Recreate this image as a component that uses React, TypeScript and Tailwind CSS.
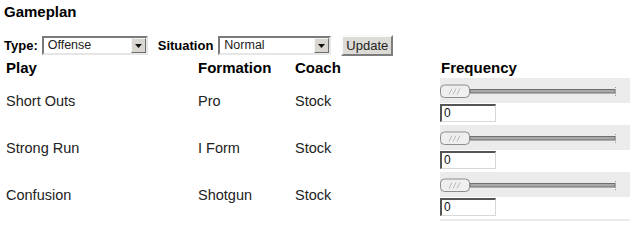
import React from 'react';

const plays = [
  { name: 'Short Outs', formation: 'Pro', coach: 'Stock' },
  { name: 'Strong Run', formation: 'I Form', coach: 'Stock' },
  { name: 'Confusion', formation: 'Shotgun', coach: 'Stock' },
];

const FakeSelect = ({ value, width }: { value: string; width: string }) => (
  <div
    className={`${width} h-[19px] flex items-stretch bg-white border-2 border-t-[#7b7b7b] border-l-[#7b7b7b] border-b-[#e6e6e6] border-r-[#e6e6e6]`}
  >
    <span className="flex-1 pl-[4px] text-[12.5px] leading-[15px] text-[#222]">{value}</span>
    <span className="w-[15px] bg-[#d9d6cf] border border-t-[#f4f4f4] border-l-[#f4f4f4] border-b-[#6e6e6e] border-r-[#6e6e6e] flex items-center justify-center">
      <svg width="7" height="4" viewBox="0 0 7 4">
        <path d="M0 0h7L3.5 4z" fill="#111" />
      </svg>
    </span>
  </div>
);

const Slider = () => (
  <svg width="190" height="25" viewBox="0 0 190 25" className="block">
    <rect x="30" y="11.5" width="145" height="3.5" fill="#a9a9a9" stroke="#6f6f6f" strokeWidth="1" />
    <line x1="175.5" y1="9" x2="175.5" y2="18" stroke="#9a9a9a" strokeDasharray="1 1" />
    <rect x="0.5" y="7" width="29" height="12.5" rx="4" fill="#efefef" stroke="#8c8c8c" />
    <path d="M9 16.5l3-6M13 16.5l3-6M17 16.5l3-6" stroke="#b9b9b9" strokeWidth="1" />
  </svg>
);

const Frequency = () => (
  <div className="h-[47px] flex flex-col">
    <div className="h-[25px] bg-[#ebebeb]">
      <Slider />
    </div>
    <div className="mt-[1px] w-[56px] h-[18px] bg-white border-2 border-t-[#555] border-l-[#555] border-b-[#d8d8d8] border-r-[#d8d8d8] border-b-[1px] border-r-[1px] pl-[2px] text-[12px] leading-[14px] text-[#111]">
      0
    </div>
  </div>
);

const App = () => {
  return (
    <div className="w-[640px] h-[221px] overflow-hidden bg-white text-black font-['Liberation_Sans',Arial,sans-serif]">
      <h1 className="pl-[4px] pt-[3px] text-[15px] leading-[17px] font-bold">Gameplan</h1>

      <div className="mt-[15px] pl-[4px] flex items-center h-[21px] text-[13px]">
        <span className="font-bold mr-[4px]">Type:</span>
        <FakeSelect value="Offense" width="w-[106px]" />
        <span className="font-bold ml-[10px] mr-[5px]">Situation</span>
        <FakeSelect value="Normal" width="w-[113px]" />
        <button className="ml-[10px] w-[52px] h-[21px] bg-[#dddbd6] border-2 border-t-[#fafafa] border-l-[#fafafa] border-b-[#7d7d7d] border-r-[#7d7d7d] text-[13px] leading-[15px] text-[#222]">
          Update
        </button>
      </div>

      <div className="mt-[1px] grid grid-cols-[192px_97px_145px_190px] pl-[6px]">
        <div className="h-[21px] pt-[2px] text-[15px] leading-[17px] font-bold">Play</div>
        <div className="h-[21px] pt-[2px] text-[15px] leading-[17px] font-bold">Formation</div>
        <div className="h-[21px] pt-[2px] text-[15px] leading-[17px] font-bold">Coach</div>
        <div className="h-[21px] pt-[2px] pl-[1px] text-[15px] leading-[17px] font-bold">Frequency</div>

        {plays.map((p) => (
          <React.Fragment key={p.name}>
            <div className="h-[47px] flex items-center text-[14.5px] leading-[17px] text-[#222]">{p.name}</div>
            <div className="h-[47px] flex items-center text-[14.5px] leading-[17px] text-[#222]">{p.formation}</div>
            <div className="h-[47px] flex items-center text-[14.5px] leading-[17px] text-[#222]">{p.coach}</div>
            <Frequency />
          </React.Fragment>
        ))}

        <div className="col-start-4 h-[25px] bg-[#ebebeb]">
          <Slider />
        </div>
      </div>
    </div>
  );
};

export default App;
